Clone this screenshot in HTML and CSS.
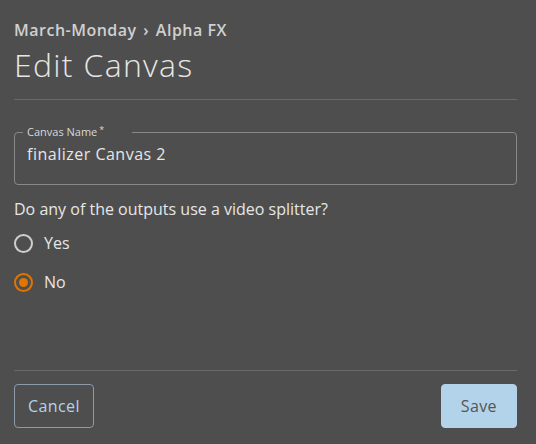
FILE: index.html
```html
<!DOCTYPE html>
<html>
<head>
<meta charset="utf-8">
<link rel="stylesheet" href="styles.css">
</head>
<body>
<div class="dialog">
  <header class="head">
    <div class="crumb">March-Monday <span class="sep">›</span> Alpha FX</div>
    <h1 class="title">Edit Canvas</h1>
  </header>
  <main class="body">
    <fieldset class="field">
      <legend class="legend">Canvas Name<span class="req">*</span></legend>
      <div class="value">finalizer Canvas 2</div>
    </fieldset>
    <div class="question">Do any of the outputs use a video splitter?</div>
    <div class="radios">
      <label class="radio"><span class="circle"></span>Yes</label>
      <label class="radio on"><span class="circle"></span>No</label>
    </div>
  </main>
  <footer class="foot">
    <button class="btn cancel">Cancel</button>
    <button class="btn save">Save</button>
  </footer>
</div>
</body>
</html>
```
FILE: styles.css
```css
html, body {
  margin: 0;
  padding: 0;
  background: #4e4e4e;
}
body {
  font-family: "Open Sans", "Liberation Sans", sans-serif;
  color: #e6e6e6;
  width: 536px;
  height: 444px;
  overflow: hidden;
}
.dialog {
  padding: 0 19px 0 14px;
  display: flex;
  flex-direction: column;
  height: 444px;
  box-sizing: border-box;
}
.head {
  padding-top: 19px;
  border-bottom: 1px solid #6a6a6a;
  padding-bottom: 14px;
}
.crumb {
  font-size: 16px;
  line-height: 22px;
  color: #d0d0d0;
  font-weight: 600;
  letter-spacing: 0.5px;
}
.sep { padding: 0 2px; }
.title {
  margin: 4px 0 0 0;
  font-size: 32px;
  font-weight: 300;
  line-height: 40px;
  letter-spacing: 1.3px;
  color: #e6e6e6;
}
.body {
  flex: 1;
  padding-top: 26px;
}
.field {
  margin: 0;
  border: 1px solid #888;
  border-radius: 4px;
  padding: 0 12px 0 12px;
  height: 59px;
  box-sizing: border-box;
}
.legend {
  font-size: 11px;
  line-height: 12px;
  margin-left: -4px;
  padding: 0 28px 0 4px;
  color: #d8d8d8;
  font-weight: 500;
}
.req {
  font-size: 9px;
  vertical-align: top;
  margin-left: 2px;
  position: relative;
  top: -2px;
}
.value {
  font-size: 16px;
  line-height: 22px;
  padding-top: 5px;
  letter-spacing: 0.5px;
  color: #e6e6e6;
}
.question {
  margin-top: 13px;
  font-size: 16px;
  line-height: 22px;
}
.radios {
  margin-top: 12px;
  display: flex;
  flex-direction: column;
  gap: 17px;
}
.radio {
  display: flex;
  align-items: center;
  gap: 11px;
  font-size: 16px;
  line-height: 22px;
}
.circle {
  width: 15px;
  height: 15px;
  border: 2px solid #cfcfcf;
  border-radius: 50%;
  position: relative;
}
.on .circle {
  border-color: #e37400;
}
.on .circle::after {
  content: "";
  position: absolute;
  left: 3px;
  top: 3px;
  width: 9px;
  height: 9px;
  border-radius: 50%;
  background: #e37400;
}
.foot {
  border-top: 1px solid #6a6a6a;
  padding: 13px 0 16px 0;
  display: flex;
  justify-content: space-between;
}
.btn {
  font-family: "Open Sans", "Liberation Sans", sans-serif;
  font-size: 16px;
  height: 44px;
  border-radius: 4px;
  padding: 0 13px;
  letter-spacing: 0.4px;
}
.cancel {
  background: transparent;
  border: 1px solid #8b9baa;
  color: #b3d3ea;
}
.save {
  background: #b3d3ea;
  border: 1px solid #b3d3ea;
  color: #555;
  padding: 0 19px;
}
```
